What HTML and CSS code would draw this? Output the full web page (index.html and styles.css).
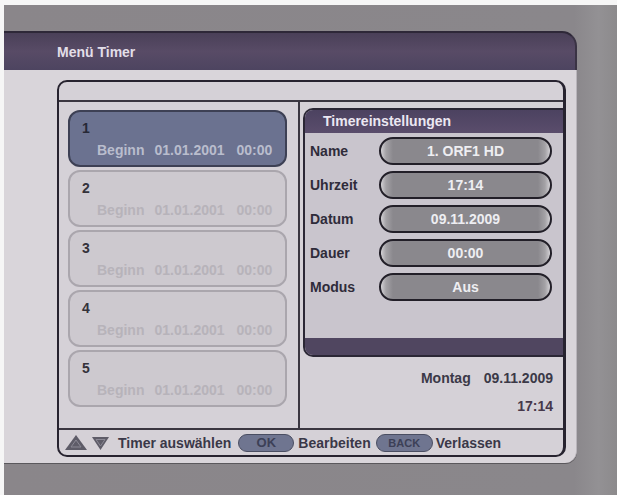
FILE: index.html
```html
<!DOCTYPE html>
<html lang="de">
<head>
<meta charset="utf-8">
<title>Menü Timer</title>
<link rel="stylesheet" href="styles.css">
</head>
<body>
<div class="screen">
  <div class="window">
    <div class="titlebar">Menü Timer</div>
    <div class="window-body">
      <div class="frame">
        <div class="frame-head"></div>
        <div class="frame-main">
          <div class="list">
            <div class="item selected"><div class="num">1</div><div class="begin"><span>Beginn</span><span class="d">01.01.2001</span><span class="t">00:00</span></div></div>
            <div class="item"><div class="num">2</div><div class="begin"><span>Beginn</span><span class="d">01.01.2001</span><span class="t">00:00</span></div></div>
            <div class="item"><div class="num">3</div><div class="begin"><span>Beginn</span><span class="d">01.01.2001</span><span class="t">00:00</span></div></div>
            <div class="item"><div class="num">4</div><div class="begin"><span>Beginn</span><span class="d">01.01.2001</span><span class="t">00:00</span></div></div>
            <div class="item"><div class="num">5</div><div class="begin"><span>Beginn</span><span class="d">01.01.2001</span><span class="t">00:00</span></div></div>
          </div>
          <div class="side">
            <div class="panel">
              <div class="panel-title">Timereinstellungen</div>
              <div class="panel-body">
                <div class="row"><span class="label">Name</span><span class="pill">1. ORF1 HD</span></div>
                <div class="row"><span class="label">Uhrzeit</span><span class="pill">17:14</span></div>
                <div class="row"><span class="label">Datum</span><span class="pill">09.11.2009</span></div>
                <div class="row"><span class="label">Dauer</span><span class="pill">00:00</span></div>
                <div class="row"><span class="label">Modus</span><span class="pill">Aus</span></div>
              </div>
              <div class="panel-foot"></div>
            </div>
            <div class="clock">
              <div class="clock-date"><span class="day">Montag</span><span>09.11.2009</span></div>
              <div class="clock-time">17:14</div>
            </div>
          </div>
        </div>
        <div class="frame-foot">
          <svg class="tri-up" width="22" height="15" viewBox="0 0 22 15"><polygon points="11,0 22,15 0,15" fill="#5e5c68"/><polygon points="11,5 16,12 6,12" fill="none" stroke="#8a8894" stroke-width="1"/></svg>
          <svg class="tri-down" width="17" height="13" viewBox="0 0 17 13"><polygon points="0,0 17,0 8.5,13" fill="#5e5c68"/><polygon points="4,2.5 13,2.5 8.5,9" fill="none" stroke="#8a8894" stroke-width="1"/></svg>
          <span class="hint first">Timer auswählen</span>
          <span class="key ok">OK</span>
          <span class="hint">Bearbeiten</span>
          <span class="key back">BACK</span>
          <span class="hint last">Verlassen</span>
        </div>
      </div>
    </div>
  </div>
</div>
</body>
</html>
```
FILE: styles.css
```css
html, body {
  margin: 0;
  padding: 0;
}
body {
  width: 617px;
  height: 495px;
  background: #f6f6f6;
  overflow: hidden;
  font-family: "Liberation Sans", Arial, sans-serif;
  font-weight: bold;
  font-size: 14px;
}
.screen {
  margin: 5px 0 0 4px;
  width: 613px;
  height: 490px;
  padding-top: 26px;
  box-sizing: border-box;
  background: linear-gradient(to right, #8a868a 0, #8a878b 93%, #939194 97%, #8c8a8c 100%);
}
.window {
  width: 573px;
}
.titlebar {
  height: 39px;
  box-sizing: border-box;
  padding: 11px 0 0 53px;
  line-height: 17px;
  color: #e2dee8;
  background: linear-gradient(to bottom, #4a4058 0, #584b66 50%, #4d4460 100%);
  border-top: 2px solid #2e2838;
  border-top-right-radius: 15px;
  border-right: 2px solid #3a3344;
}
.window-body {
  height: 393px;
  box-sizing: border-box;
  padding: 10px 10px 6px 53px;
  background: #d9d5da;
  border-bottom-right-radius: 12px;
  border-right: 1px solid #b9b5bb;
  box-shadow: 0 1px 0 #5a585c;
}
.frame {
  height: 377px;
  box-sizing: border-box;
  border: 2px solid #27232f;
  border-right-width: 3px;
  border-radius: 10px;
  background: #d5d1d7;
  display: flex;
  flex-direction: column;
}
.frame-head {
  height: 18px;
  border-bottom: 2px solid #3a3640;
  flex: none;
}
.frame-main {
  height: 326px;
  display: flex;
  flex: none;
}
.list {
  width: 241px;
  box-sizing: border-box;
  border-right: 2px solid #3a3640;
  padding: 8px 11px 0 9px;
  display: flex;
  flex-direction: column;
  gap: 3px;
}
.item {
  height: 57px;
  box-sizing: border-box;
  border: 2px solid #aaa6ad;
  border-radius: 12px;
  background: #cdc9cf;
  padding: 8px 0 0 12px;
}
.item .num {
  line-height: 16px;
  color: #34323a;
}
.item .begin {
  line-height: 16px;
  margin: 6px 0 0 15px;
  color: #b7b3ba;
  display: flex;
}
.item .begin .d { margin-left: 10px; }
.item .begin .t { margin-left: 12px; }
.item.selected {
  background: #6b7290;
  border-color: #3d4054;
}
.item.selected .num { color: #262836; }
.item.selected .begin { color: #b9bdcd; }
.side {
  flex: 1;
  padding-top: 6px;
  padding-left: 3px;
  display: flex;
  flex-direction: column;
}
.panel {
  height: 249px;
  box-sizing: border-box;
  border: 2px solid #2b2735;
  border-right: 0;
  border-radius: 10px 0 0 10px;
  background: #c9c5cd;
  display: flex;
  flex-direction: column;
  overflow: hidden;
}
.panel-title {
  height: 23px;
  flex: none;
  padding-left: 18px;
  line-height: 22px;
  color: #ebe7f2;
  background: linear-gradient(to bottom, #4c4260, #5a4d6c);
}
.panel-body {
  flex: 1;
  padding: 4px 11px 0 5px;
  display: flex;
  flex-direction: column;
  gap: 6px;
}
.row {
  display: flex;
  align-items: center;
  height: 28px;
}
.label {
  flex: 1;
  color: #2f2c3a;
}
.pill {
  width: 173px;
  height: 28px;
  box-sizing: border-box;
  border: 2px solid #221f28;
  border-radius: 14px;
  background: linear-gradient(to right, #d2d0d4 0, #a4a2a6 5px, #8a888d 12px, #8a888d calc(100% - 12px), #a4a2a6 calc(100% - 5px), #d2d0d4 100%);
  color: #eeeef2;
  text-align: center;
  line-height: 24px;
}
.panel-foot {
  height: 17px;
  flex: none;
  background: #504660;
}
.clock {
  padding-right: 10px;
  text-align: right;
  color: #3b3947;
}
.clock-date {
  margin-top: 12px;
  line-height: 18px;
  display: flex;
  justify-content: flex-end;
  gap: 13px;
}
.clock-time {
  margin-top: 10px;
  line-height: 18px;
  color: #46384a;
}
.frame-foot {
  flex: 1;
  border-top: 2px solid #3a3640;
  display: flex;
  align-items: center;
  padding-left: 6px;
  color: #3a3848;
}
.tri-up { margin-right: 5px; }
.tri-down { margin-right: 9px; margin-top: 1px; }
.hint { line-height: 18px; }
.hint.first { margin-right: 7px; }
.key {
  height: 18px;
  box-sizing: border-box;
  border: 1px solid #4a4e62;
  border-radius: 9px;
  background: #6f7590;
  color: #3c4057;
  text-align: center;
  line-height: 16px;
}
.key.ok {
  width: 56px;
  margin-right: 4px;
  font-size: 13px;
}
.key.back {
  width: 57px;
  margin: 0 3px 0 5px;
  font-size: 11px;
}
```
